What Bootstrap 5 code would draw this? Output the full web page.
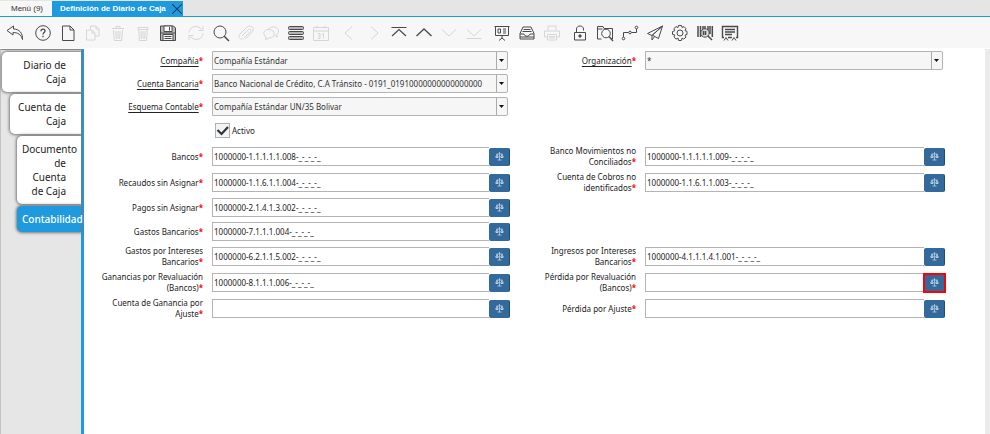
<!DOCTYPE html>
<html lang="es">
<head>
<meta charset="utf-8">
<meta name="viewport" content="width=device-width, initial-scale=1">
<title>Definición de Diario de Caja</title>
<link href="https://cdn.jsdelivr.net/npm/bootstrap@5.3.0/dist/css/bootstrap.min.css" rel="stylesheet">
<style>
body{font-family:"Noto Sans","Open Sans",sans-serif;font-size:8px;line-height:11px;color:#222;background:#fff}
.win-tabs{background:#e5e5e5;border-bottom:1px solid #1b9cdf;font:8px/15px "Liberation Sans",Arial,sans-serif}
.win-tabs button{border:0;height:15px;padding:0 9px 0 11px;background:#f7f7f7;color:#333;margin-top:1px}
.win-tabs .current{background:#1f9ade;color:#fff;font-weight:700;padding:0 1px 0 8px;gap:6px;height:15px}
.toolbar-strip{background:#f7f7f7;height:31px;padding:0 2px;gap:3px}
.toolbar-strip button{width:25px;height:29px;padding:0;border:0;background:none;color:#4a4a4a}
.toolbar-strip button:disabled{color:#d6d6d6}
.toolbar-strip svg{width:18px;height:18px;fill:none;stroke:currentColor;stroke-width:1;display:block;margin:1px auto 0}
.side{width:84px;background:#e6e6e6;border-right:3px solid #1f9ade;border-left:1px solid #c4c4c4;border-top:1px solid #8d8d8d;margin-top:1px;padding-top:2px;gap:2px;font-size:10px;line-height:14px}
.side a{display:block;background:#fff;color:#222;text-decoration:none;text-align:right;padding:6px 15px 6px 5px;margin-left:1px;border-radius:5px 0 0 5px;box-shadow:0 0 3px 1px #777}
.side .lv2{margin-left:9px}
.side .lv3{margin-left:16px}
.side .here{background:#1f9ade;color:#fff;font-weight:500}
.form-area{border-right:5px solid #ebebeb;margin-top:1px}
.acct-grid{display:grid;grid-template-columns:128fr 298fr 135fr 300fr 40fr;align-items:center}
.acct-grid .r-top{height:23px}
.acct-grid .r-check{height:25px}
.acct-grid .r-mid{height:24px}
.acct-grid .r-acct{height:26px}
.acct-grid>*{min-width:0}
.cap{display:flex;align-items:center;justify-content:flex-end;text-align:right;padding:0 9px 0 14px}
.cap u{text-underline-offset:2px}
.cap b{color:#f00}
.combo{display:block;width:calc(100% - 2px);height:19px;border:1px solid #b4b4b4;border-radius:0 2px 2px 0;color:#333;padding:0 14px 0 1px;appearance:none;background:#f6f6f6 url("data:image/svg+xml,%3Csvg xmlns='http://www.w3.org/2000/svg' width='11' height='17'%3E%3Cpath d='M.5 0v17' stroke='%23aaa'/%3E%3Cpath d='M3 7h5L5.500 10z' fill='%23111'/%3E%3C/svg%3E") right center no-repeat}
.acct{min-width:0;height:19px;border:1px solid #b4b4b4;border-right:0;color:#222;padding:0 1px}
.pick{width:21px;height:18px;border:0;border-right:1px solid #1f4d75;border-radius:2px;background:#336a9b;color:#b9d0e3;padding:0;margin-top:1px}
.pick svg{width:9px;height:9px;display:block;margin:auto}
.pick.marked{outline:2px solid #f00;outline-offset:-1px;border-radius:0}
.tick{appearance:none;width:15px;height:15px;margin:0 2px 0 3px;border:1px solid #a9b3bb;background:#f4f4f4 url("data:image/svg+xml,%3Csvg xmlns='http://www.w3.org/2000/svg' viewBox='0 0 13 13'%3E%3Cpath d='M1.500 6l4 4L12 3' fill='none' stroke='%23333' stroke-width='2.2'/%3E%3C/svg%3E") center no-repeat}
</style>
<script src="https://cdn.jsdelivr.net/npm/bootstrap@5.3.0/dist/js/bootstrap.bundle.min.js"></script>
</head>
<body class="d-flex flex-column min-vh-100">
<svg class="d-none"><symbol id="scale" viewBox="0 0 9 9"><path d="M4.500 0v8M2.500 8h4M1.500 2h6M2 2L1 5M2 2l1 3M7 2L6 5M7 2l1 3" fill="none" stroke="currentColor" stroke-width=".8"/><path d="M0 4.500h4L3 6H1zM5 4.500h4L8 6H6z" fill="currentColor"/></symbol></svg>
<header>
<div class="win-tabs d-flex">
<button type="button">Menú (9)</button>
<button type="button" class="current d-flex align-items-center ms-0">Definición de Diario de Caja <svg width="10" height="10" viewBox="0 0 10 10" aria-hidden="true"><path d="M0 0l10 10M10 0L0 10" stroke="#17405c" stroke-width="1.1"/></svg></button>
</div>
<div class="toolbar-strip d-flex align-items-center">
<div class="d-flex">
<button aria-label="Deshacer"><svg viewBox="0 0 18 18"><path d="M7.500 2L1 6.500 7 11V8.500c5 0 8 2 9.500 7C17 9 13 5 7.500 5z"/></svg></button>
</div>
<div class="d-flex">
<button aria-label="Ayuda"><svg viewBox="0 0 18 18"><circle cx="9" cy="9" r="7.300"/><path d="M7 7.200C7 4.500 11 4.500 11 7c0 1.500-2 1.700-2 3.500M9 11.700v1.500" stroke-width="1.300"/></svg></button>
<button aria-label="Nuevo"><svg viewBox="0 0 18 18"><path d="M3.500 2h7.500l4 4v10.500H3.500zM11 2v4h4"/></svg></button>
<button aria-label="Copiar" disabled><svg viewBox="0 0 18 18"><path d="M6.500 5.500V2H12l3 3v7h-4M12 2v3h3M2.500 6H8l3 3v7H2.500zM8 6v3h3"/></svg></button>
<button aria-label="Eliminar" disabled><svg viewBox="0 0 18 18"><path d="M3 4.500h12M7 4.500V2.500h4v2M4.500 6l.8 10.500h7.400L13.500 6M7 7l.3 8M9 7v8M11 7l-.3 8"/></svg></button>
<button aria-label="Eliminar selección" disabled><svg viewBox="0 0 18 18"><path d="M4 3.500h10v2H4zM4.800 6l.6 10.500h7.200L13.200 6M7 7l.3 8M9 7v8M11 7l-.3 8"/></svg></button>
<button aria-label="Guardar"><svg viewBox="0 0 18 18"><path d="M1.500 2h13l2 2v12.500h-15z" fill="#b9b9b9"/><path d="M5 2h8v5.500H5z" fill="#fff"/><path d="M4 10.500h10v6H4z" fill="#f7f7f7"/><path d="M10.500 3v3.500M5.500 12.500h7M5.500 14.500h7M1.500 9h15"/></svg></button>
</div>
<div class="d-flex">
<button aria-label="Refrescar" disabled><svg viewBox="0 0 18 18"><path d="M2 8.500C2.500 2 11 .5 14.500 5.500M16 2v4.500h-4.500M16 9.500c-.5 6.500-9 8-12.500 3M2 16v-4.500h4.500"/></svg></button>
<button aria-label="Buscar"><svg viewBox="0 0 18 18"><circle cx="8" cy="8" r="6"/><path d="M12.200 12.200L17 17" stroke-width="1.500"/></svg></button>
<button aria-label="Adjunto" disabled><svg viewBox="0 0 18 18"><path d="M5 12l6.500-6.500c1.500-1 3 .5 2 2L6.500 14.500c-2.500 2-6-1-4-4L10 3c3.500-3 8 1 5.500 4.500L8.500 15"/></svg></button>
<button aria-label="Conversación" disabled><svg viewBox="0 0 18 18"><path d="M6.500 5.500c1-4 10-3.500 10 1.500 0 2-1 3-2 3.500l1 2.500-3-1.500"/><path d="M7 5.500c7 0 7 8.500 0 8.500l-3.500 1.500.5-2.500C.5 11 1 5.500 7 5.500z"/></svg></button>
<button aria-label="Vista de cuadrícula"><svg viewBox="0 0 18 18"><g fill="#b5b5b5"><rect x="1.500" y="2.500" width="15" height="3" rx="1"/><rect x="1.500" y="7.500" width="15" height="3" rx="1"/><rect x="1.500" y="12.500" width="15" height="3" rx="1"/></g></svg></button>
<button aria-label="Calendario" disabled><svg viewBox="0 0 18 18"><path d="M1.500 3.500h15v13h-15zM1.500 7h15M5 1.500v3M13 1.500v3M5.500 9.500H8V14.500H5.500M6 12h2M10 10.500l1.500-1v5"/></svg></button>
</div>
<div class="d-flex">
<button aria-label="Anterior" disabled><svg viewBox="0 0 18 18"><path d="M12 2.500L5 9l7 6.500"/></svg></button>
<button aria-label="Siguiente" disabled><svg viewBox="0 0 18 18"><path d="M6 2.500L13 9l-7 6.500"/></svg></button>
<button aria-label="Primer registro"><svg viewBox="0 0 18 18"><path d="M1.500 3.500h15M2 12l7-6.500 7 6.500" stroke-width="1.200"/></svg></button>
<button aria-label="Registro padre"><svg viewBox="0 0 18 18"><path d="M1.500 12L9 5l7.500 7" stroke-width="1.300"/></svg></button>
<button aria-label="Registro detalle" disabled><svg viewBox="0 0 18 18"><path d="M2 5.500L9 12l7-6.500"/></svg></button>
<button aria-label="Último registro" disabled><svg viewBox="0 0 18 18"><path d="M2 5.500L9 12l7-6.500M1.500 14.500h15"/></svg></button>
</div>
<div class="d-flex">
<button aria-label="Informe"><svg viewBox="0 0 18 18"><path d="M1.500 2.500h15M2.500 2.500v9h13v-9M9 11.500v3M6 16.500l3-2.500 3 2.500M5 5v4h2.500V5zM10 5h3M10 7h3M10 9h3"/></svg></button>
<button aria-label="Archivo"><svg viewBox="0 0 18 18"><path d="M2 9.500L5 3h8l3 6.500v5.500H2zM2 10h4c.5 3 5.500 3 6 0h4M5.500 5.500h7M4.500 7.500h9M2 13h14"/></svg></button>
<button aria-label="Imprimir" disabled><svg viewBox="0 0 18 18"><path d="M5 7V2h8v5M4 13H1.500V7h15v6H14M4.500 10.500h9v5.500h-9zM6 12.500h6M6 14h6"/></svg></button>
</div>
<div class="d-flex">
<button aria-label="Bloquear"><svg viewBox="0 0 18 18"><path d="M3.500 8.500h11v7.500h-11zM5.500 8V5c0-4 7-4 7 0v1.500"/><circle cx="9" cy="12" r="1.200" fill="currentColor"/></svg></button>
<button aria-label="Zoom"><svg viewBox="0 0 18 18"><path d="M5.500 15h-4V2.500H7l1 2h8.500V15H15M1.500 5h5"/><circle cx="10" cy="9.500" r="4.300"/><path d="M13 12.500L17 17" stroke-width="1.300"/></svg></button>
<button aria-label="Flujo de trabajo"><svg viewBox="0 0 18 18"><circle cx="2.500" cy="14.500" r="1.300"/><circle cx="9" cy="8.500" r="1.300"/><circle cx="15.500" cy="3.500" r="1.300"/><path d="M2.500 13V8.500h5M10.500 8.500h5V5"/></svg></button>
<button aria-label="Solicitud"><svg viewBox="0 0 18 18"><path d="M16.500 2L1.500 9.500l4.500 2zM16.500 2L6 11.500V16l2.500-3.500M16.500 2l-4 12.500L7 11.500"/></svg></button>
<button aria-label="Proceso"><svg viewBox="0 0 18 18"><circle cx="9" cy="9" r="3"/><path d="M7.500 1.500h3l.5 2 2-.9 2 2.100-1 1.900 2 .7v3.200l-2 .6 1 2-2.200 2-1.800-1-.6 2.400H7.600L7 14.100l-2 1-2.100-2.100 1-2-2.400-.6V7.500l2.300-.8-.9-2L5 2.600l2 .9z"/></svg></button>
<button aria-label="Información de producto"><svg viewBox="0 0 18 18"><path d="M2 2v11M4.500 2v11M7 2v4M9 2v3M12 2v4M14 2v8M16.300 2v11" stroke-width="1.500"/><circle cx="9" cy="9" r="4.200" fill="#ddd"/><path d="M12 12l4 4M7.500 7v4M9.500 7v4" stroke-width="1.500"/></svg></button>
<button aria-label="Atributos"><svg viewBox="0 0 18 18"><path d="M3 13.500H1.500v-11h15v11H15M4 5.500h10M4 8h10M4 10.500h7M7 13.500h4" stroke-width="1.400"/><path d="M3 16.500l2-3 2 3M11 16.500l2-3 2 3"/></svg></button>
</div>
</div>
</header>
<div class="d-flex flex-grow-1">
<nav class="side d-flex flex-column flex-shrink-0" aria-label="Pestañas">
<a href="#">Diario de Caja</a>
<a href="#" class="lv2">Cuenta de Caja</a>
<a href="#" class="lv3">Documento de Cuenta de Caja</a>
<a href="#" class="lv3 here">Contabilidad</a>
</nav>
<main class="form-area flex-grow-1">
<form class="acct-grid">
<label class="cap r-top" for="cia"><span><u>Compañía</u><b>*</b></span></label><div><select id="cia" class="combo"><option>Compañía Estándar</option></select></div>
<label class="cap r-top" for="org"><span><u>Organización</u><b>*</b></span></label><div><select id="org" class="combo"><option>*</option></select></div><span></span>
<label class="cap r-top" for="cta"><span><u>Cuenta Bancaria</u><b>*</b></span></label><div><select id="cta" class="combo"><option>Banco Nacional de Crédito, C.A Tránsito - 0191_01910000000000000000</option></select></div><span></span><span></span><span></span>
<label class="cap r-top" for="esq"><span><u>Esquema Contable</u><b>*</b></span></label><div><select id="esq" class="combo"><option>Compañía Estándar UN/35 Bolivar</option></select></div><span></span><span></span><span></span>
<span class="r-check"></span><div class="d-flex align-items-center"><input type="checkbox" class="tick" id="act" checked><label for="act">Activo</label></div><span></span><span></span><span></span>
<label class="cap r-acct" for="a1"><span>Bancos<b>*</b></span></label><div class="d-flex"><input id="a1" class="acct flex-grow-1" value="1000000-1.1.1.1.1.008-_-_-_-_"><button type="button" class="pick" aria-label="Cuenta"><svg><use href="#scale"/></svg></button></div>
<label class="cap r-acct" for="b1"><span>Banco Movimientos no Conciliados<b>*</b></span></label><div class="d-flex"><input id="b1" class="acct flex-grow-1" value="1000000-1.1.1.1.1.009-_-_-_-_"><button type="button" class="pick" aria-label="Cuenta"><svg><use href="#scale"/></svg></button></div><span></span>
<label class="cap r-acct" for="a2"><span>Recaudos sin Asignar<b>*</b></span></label><div class="d-flex"><input id="a2" class="acct flex-grow-1" value="1000000-1.1.6.1.1.004-_-_-_-_"><button type="button" class="pick" aria-label="Cuenta"><svg><use href="#scale"/></svg></button></div>
<label class="cap r-acct" for="b2"><span>Cuenta de Cobros no identificados<b>*</b></span></label><div class="d-flex"><input id="b2" class="acct flex-grow-1" value="1000000-1.1.6.1.1.003-_-_-_-_"><button type="button" class="pick" aria-label="Cuenta"><svg><use href="#scale"/></svg></button></div><span></span>
<label class="cap r-mid" for="a3"><span>Pagos sin Asignar<b>*</b></span></label><div class="d-flex"><input id="a3" class="acct flex-grow-1" value="1000000-2.1.4.1.3.002-_-_-_-_"><button type="button" class="pick" aria-label="Cuenta"><svg><use href="#scale"/></svg></button></div><span></span><span></span><span></span>
<label class="cap r-mid" for="a4"><span>Gastos Bancarios<b>*</b></span></label><div class="d-flex"><input id="a4" class="acct flex-grow-1" value="1000000-7.1.1.1.004-_-_-_-_"><button type="button" class="pick" aria-label="Cuenta"><svg><use href="#scale"/></svg></button></div><span></span><span></span><span></span>
<label class="cap r-acct" for="a5"><span>Gastos por Intereses Bancarios<b>*</b></span></label><div class="d-flex"><input id="a5" class="acct flex-grow-1" value="1000000-6.2.1.1.5.002-_-_-_-_"><button type="button" class="pick" aria-label="Cuenta"><svg><use href="#scale"/></svg></button></div>
<label class="cap r-acct" for="b5"><span>Ingresos por Intereses Bancarios<b>*</b></span></label><div class="d-flex"><input id="b5" class="acct flex-grow-1" value="1000000-4.1.1.1.4.1.001-_-_-_-_"><button type="button" class="pick" aria-label="Cuenta"><svg><use href="#scale"/></svg></button></div><span></span>
<label class="cap r-acct" for="a6"><span>Ganancias por Revaluación (Bancos)<b>*</b></span></label><div class="d-flex"><input id="a6" class="acct flex-grow-1" value="1000000-8.1.1.1.006-_-_-_-_"><button type="button" class="pick" aria-label="Cuenta"><svg><use href="#scale"/></svg></button></div>
<label class="cap r-acct" for="b6"><span>Pérdida por Revaluación (Bancos)<b>*</b></span></label><div class="d-flex"><input id="b6" class="acct flex-grow-1"><button type="button" class="pick marked" aria-label="Cuenta"><svg><use href="#scale"/></svg></button></div><span></span>
<label class="cap r-acct" for="a7"><span>Cuenta de Ganancia por Ajuste<b>*</b></span></label><div class="d-flex"><input id="a7" class="acct flex-grow-1"><button type="button" class="pick" aria-label="Cuenta"><svg><use href="#scale"/></svg></button></div>
<label class="cap r-acct" for="b7"><span>Pérdida por Ajuste<b>*</b></span></label><div class="d-flex"><input id="b7" class="acct flex-grow-1"><button type="button" class="pick" aria-label="Cuenta"><svg><use href="#scale"/></svg></button></div><span></span>
</form>
</main>
</div>
</body>
</html>
